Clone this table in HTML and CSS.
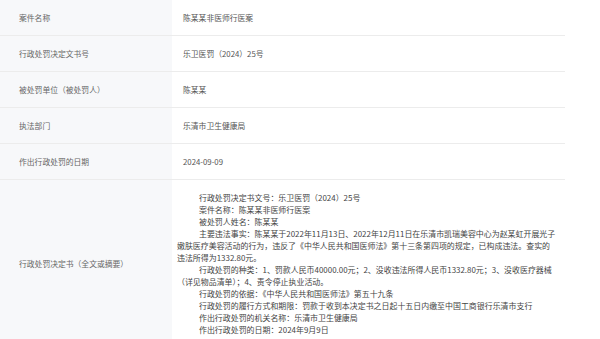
FILE: index.html
```html
<!DOCTYPE html>
<html lang="zh-CN">
<head>
<meta charset="utf-8">
<title>行政处罚信息</title>
<link rel="stylesheet" href="styles.css">
</head>
<body>
<div class="info-table">
  <div class="row">
    <div class="label">案件名称</div>
    <div class="value">陈某某非医师行医案</div>
  </div>
  <div class="row">
    <div class="label">行政处罚决定文书号</div>
    <div class="value">乐卫医罚（2024）25号</div>
  </div>
  <div class="row">
    <div class="label">被处罚单位（被处罚人）</div>
    <div class="value">陈某某</div>
  </div>
  <div class="row">
    <div class="label">执法部门</div>
    <div class="value">乐清市卫生健康局</div>
  </div>
  <div class="row">
    <div class="label">作出行政处罚的日期</div>
    <div class="value">2024-09-09</div>
  </div>
  <div class="row row-full">
    <div class="label">行政处罚决定书（全文或摘要）</div>
    <div class="value full">
      <p>行政处罚决定书文号：乐卫医罚（2024）25号</p>
      <p>案件名称：陈某某非医师行医案</p>
      <p>被处罚人姓名：陈某某</p>
      <p>主要违法事实：陈某某于2022年11月13日、2022年12月11日在乐清市凯瑞美容中心为赵某虹开展光子嫩肤医疗美容活动的行为，违反了《中华人民共和国医师法》第十三条第四项的规定，已构成违法。查实的违法所得为1332.80元。</p>
      <p>行政处罚的种类：1、罚款人民币40000.00元；2、没收违法所得人民币1332.80元；3、没收医疗器械（详见物品清单）；4、责令停止执业活动。</p>
      <p>行政处罚的依据：《中华人民共和国医师法》第五十九条</p>
      <p>行政处罚的履行方式和期限：罚款于收到本决定书之日起十五日内缴至中国工商银行乐清市支行</p>
      <p>作出行政处罚的机关名称：乐清市卫生健康局</p>
      <p>作出行政处罚的日期：2024年9月9日</p>
    </div>
  </div>
</div>
</body>
</html>
```

FILE: styles.css
```css
html, body {
  margin: 0;
  padding: 0;
  background: #ffffff;
}
body {
  font-family: "Noto Sans CJK SC", "Noto Sans", sans-serif;
  font-size: 7.8px;
  color: #555;
}
.info-table {
  width: 565px;
}
.row {
  display: grid;
  grid-template-columns: 172px 393px;
  border-bottom: 1px solid #ececec;
  height: 35px;
}
.label {
  background: #f7f8fa;
  color: #666;
  padding-left: 19px;
  display: flex;
  align-items: center;
  line-height: 12px;
}
.value {
  padding-left: 11px;
  display: flex;
  align-items: center;
  color: #555;
  line-height: 12px;
}
.row-full {
  height: auto;
}
.value.full {
  display: block;
  padding: 12px 8px 12px 5px;
  color: #444;
  font-size: 7.95px;
}
.value.full p {
  margin: 0;
  text-indent: 22px;
  line-height: 12px;
}
```
